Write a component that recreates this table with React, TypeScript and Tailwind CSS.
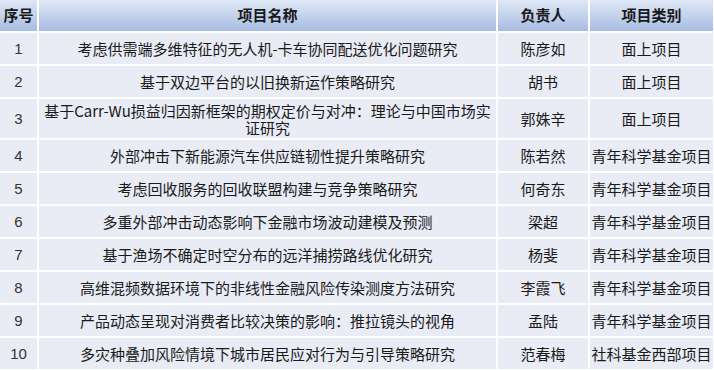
const rows = [
  ["1", "考虑供需端多维特征的无人机-卡车协同配送优化问题研究", "陈彦如", "面上项目"],
  ["2", "基于双边平台的以旧换新运作策略研究", "胡书", "面上项目"],
  ["3", "基于Carr-Wu损益归因新框架的期权定价与对冲：理论与中国市场实证研究", "郭姝辛", "面上项目"],
  ["4", "外部冲击下新能源汽车供应链韧性提升策略研究", "陈若然", "青年科学基金项目"],
  ["5", "考虑回收服务的回收联盟构建与竞争策略研究", "何奇东", "青年科学基金项目"],
  ["6", "多重外部冲击动态影响下金融市场波动建模及预测", "梁超", "青年科学基金项目"],
  ["7", "基于渔场不确定时空分布的远洋捕捞路线优化研究", "杨斐", "青年科学基金项目"],
  ["8", "高维混频数据环境下的非线性金融风险传染测度方法研究", "李霞飞", "青年科学基金项目"],
  ["9", "产品动态呈现对消费者比较决策的影响：推拉镜头的视角", "孟陆", "青年科学基金项目"],
  ["10", "多灾种叠加风险情境下城市居民应对行为与引导策略研究", "范春梅", "社科基金西部项目"],
];

const headers = ["序号", "项目名称", "负责人", "项目类别"];

export default function App() {
  return (
    <div className="w-[714px] h-[370px] bg-white overflow-hidden font-['Noto_Sans_CJK_SC','Noto_Sans',sans-serif] text-[15px] text-[#1a1a1a]">
      <div className="grid grid-cols-[37px_457px_90px_123px] grid-rows-[31px_31px_31px_39px_repeat(7,31px)] gap-[2px]">
        {headers.map((h) => (
          <div
            key={h}
            className="flex items-center justify-center font-bold bg-gradient-to-b from-[#e0e8f5] to-[#a7bce2]"
          >
            {h}
          </div>
        ))}
        {rows.map((r) =>
          r.map((c, i) => (
            <div
              key={r[0] + "-" + i}
              className={`flex items-center justify-center text-center bg-[#e9ebf5] leading-[17px] ${i === 0 ? "font-['Liberation_Sans','Noto_Sans_CJK_SC',sans-serif] text-[#333]" : ""} ${i === 1 ? "px-[2px]" : ""}`}
            >
              {c}
            </div>
          ))
        )}
      </div>
    </div>
  );
}
